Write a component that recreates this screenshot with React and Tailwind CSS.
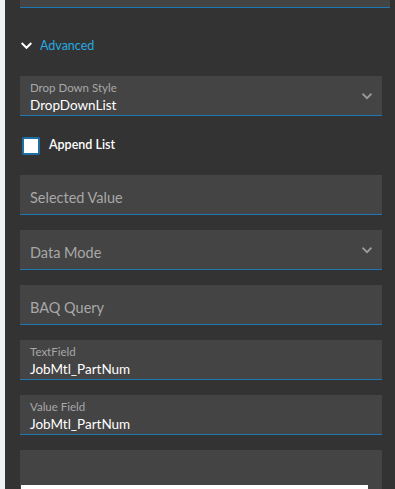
import React from "react";

const Chevron = ({ className, w = 12, h = 8 }) => (
  <svg className={className} width={w} height={h} viewBox="0 0 12 8" fill="none">
    <path d="M1.5 1.5 L6 6 L10.5 1.5" stroke="currentColor" strokeWidth="2.2" strokeLinecap="square" />
  </svg>
);

const Field = ({ label, value, placeholder, dropdown }) => (
  <div className="relative shrink-0 h-[40px] bg-[#444444] border-b border-[#1d78b4] flex flex-col justify-center px-[10px]">
    {placeholder ? (
      <div className="text-[14.5px] leading-[18px] text-[#a8a8a8] pt-[6px]">{placeholder}</div>
    ) : (
      <>
        <div className="text-[11.5px] leading-[14px] text-[#a8a8a8] pt-[3px]">{label}</div>
        <div className="text-[13.5px] leading-[17px] text-white pt-[2px]">{value}</div>
      </>
    )}
    {dropdown && <Chevron w={10} h={7} className="absolute right-[10px] top-[17px] text-[#9a9a9a]" />}
  </div>
);

export default function App() {
  return (
    <div
      className="flex w-[395px] h-[489px] overflow-hidden"
      style={{ fontFamily: "Lato, 'Open Sans', sans-serif" }}
    >
      <div className="w-[5px] shrink-0 bg-[#eef2f5]" />
      <div className="flex-1 bg-[#333333] pl-[15px] flex flex-col">
        <div className="h-[8px] shrink-0 mr-[5px] bg-[#444444] border-b border-[#1d78b4]" />
        <div className="mr-[13px] flex flex-col shrink-0">
          <div className="h-[68px] shrink-0 flex items-center pl-[1px] pt-[8px]">
            <Chevron w={11} h={8} className="text-white" />
            <span className="ml-[8px] text-[12.5px] text-[#27a9e1]">Advanced</span>
          </div>
          <Field label="Drop Down Style" value="DropDownList" dropdown />
          <div className="h-[59px] shrink-0 flex items-center pl-[2px]">
            <div className="w-[18px] h-[18px] border-2 border-[#1d6fa6] bg-white rounded-[2px]" />
            <span className="ml-[9px] text-[12.5px] text-white font-semibold">Append List</span>
          </div>
          <div className="flex flex-col gap-[15px] shrink-0">
            <Field placeholder="Selected Value" />
            <Field placeholder="Data Mode" dropdown />
            <Field placeholder="BAQ Query" />
            <Field label="TextField" value="JobMtl_PartNum" />
            <Field label="Value Field" value="JobMtl_PartNum" />
            <div className="h-[60px] shrink-0 bg-[#444444] pt-[35px] pl-[1px] pr-[14px]">
              <div className="h-full bg-white" />
            </div>
          </div>
        </div>
      </div>
    </div>
  );
}
